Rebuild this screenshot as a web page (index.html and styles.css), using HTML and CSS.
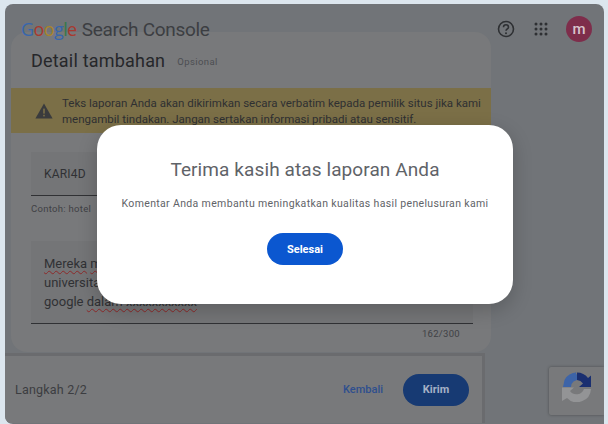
FILE: index.html
```html
<!DOCTYPE html>
<html lang="id">
<head>
<meta charset="utf-8">
<title>Google Search Console</title>
<link rel="stylesheet" href="styles.css">
</head>
<body>
<div class="window">
  <header class="topbar">
    <div class="logo"><span class="g-blue">G</span><span class="g-red">o</span><span class="g-yellow">o</span><span class="g-blue">g</span><span class="g-green">l</span><span class="g-red">e</span> <span class="product">Search Console</span></div>
    <div class="top-actions">
      <svg class="help" viewBox="0 0 24 24" width="20" height="20"><circle cx="12" cy="12" r="9" fill="none" stroke="#2e3033" stroke-width="1.9"/><path d="M9 9.8a3 3 0 0 1 6 0c0 2-3 2.2-3 4.4" fill="none" stroke="#2e3033" stroke-width="1.9"/><circle cx="12" cy="17" r="1.2" fill="#2e3033"/></svg>
      <svg class="apps" viewBox="0 0 14 14" width="14" height="14"><g fill="#2e3033"><circle cx="2" cy="2" r="1.5"/><circle cx="7" cy="2" r="1.5"/><circle cx="12" cy="2" r="1.5"/><circle cx="2" cy="7" r="1.5"/><circle cx="7" cy="7" r="1.5"/><circle cx="12" cy="7" r="1.5"/><circle cx="2" cy="12" r="1.5"/><circle cx="7" cy="12" r="1.5"/><circle cx="12" cy="12" r="1.5"/></g></svg>
      <div class="avatar">m</div>
    </div>
  </header>
  <main class="card">
    <div class="card-head"><h1>Detail tambahan</h1><span class="optional">Opsional</span></div>
    <div class="warning">
      <svg viewBox="0 0 18 16" width="18" height="16"><path d="M9 0.5 17.6 15.5H.4Z" fill="#3a3b3d"/><rect x="8.2" y="5.6" width="1.6" height="5" fill="#7b6f47"/><rect x="8.2" y="11.8" width="1.6" height="1.6" fill="#7b6f47"/></svg>
      <p>Teks laporan Anda akan dikirimkan secara verbatim kepada pemilik situs jika kami<br>mengambil tindakan. Jangan sertakan informasi pribadi atau sensitif.</p>
    </div>
    <div class="field"><div class="field-box">KARI4D</div><div class="hint">Contoh: hotel</div></div>
    <div class="area">
      <div class="area-box"><span class="sq">Mereka</span> <span class="sq">m</span><br>universitas<br>google <span class="sq">dalam xxxxxxxxxxx</span></div>
      <div class="count">162/300</div>
    </div>
  </main>
  <footer class="footer">
    <span class="step">Langkah 2/2</span>
    <div class="footer-actions"><span class="back">Kembali</span><span class="send">Kirim</span></div>
  </footer>
  <div class="recaptcha">
    <svg viewBox="0 0 30 30" width="30" height="30"><path d="M15 0.5A14 14 0 0 1 26 6l3-2.5V15H17l4-3.5A8 8 0 0 0 15 8Z" fill="#1a2f70"/><path d="M15 .5A14 14 0 0 0 2.5 8L1 15h8a7 7 0 0 1 2.500-5.500L15 8V3l-2-3Z" fill="#3d64a8"/><path d="M0 15.500h12l-4 3.500a8 8 0 0 0 14-2h7a14 14 0 0 1-24 9l-5 3Z" fill="#939496"/></svg>
  </div>
</div>
<div class="modal">
  <h2>Terima kasih atas laporan Anda</h2>
  <p>Komentar Anda membantu meningkatkan kualitas hasil penelusuran kami</p>
  <button class="done">Selesai</button>
</div>
</body>
</html>
```
FILE: styles.css
```css
html, body { margin: 0; padding: 0; height: 424px; overflow: hidden; }
body { background: #dce6ee; font-family: Roboto, "Liberation Sans", sans-serif; position: relative; padding: 4px 4px 0 5px; box-sizing: border-box; }
.window { height: 420px; background: #717478; border-radius: 8px 8px 0 8px; position: relative; overflow: hidden; }
.topbar { height: 28px; display: flex; justify-content: space-between; align-items: center; padding: 11px 12px 0 16px; }
.logo { font-family: "Open Sans", Roboto, sans-serif; font-size: 18px; letter-spacing: -0.6px; white-space: nowrap; }
.product { color: #3c3e42; font-family: Roboto, sans-serif; font-size: 19px; letter-spacing: -0.3px; margin-left: 1px; }
.g-blue { color: #3766ac; } .g-red { color: #a8392f; } .g-yellow { color: #a8852a; } .g-green { color: #34794a; }
.top-actions { display: flex; align-items: center; }
.help { margin-right: 18px; }
.apps { margin-right: 18px; }
.avatar { width: 26px; height: 26px; border-radius: 50%; background: #7e2d4b; color: #d8c3cc; font-size: 15px; font-weight: 500; display: flex; align-items: center; justify-content: center; }
.card { width: 480px; height: 320px; margin: -11px 0 0 6px; box-sizing: border-box; background: #78797b; border-radius: 16px 16px 16px 16px; }
.card-head { height: 56px; display: flex; align-items: center; padding: 0 0 0 20px; box-sizing: border-box; }
.card-head h1 { margin: 0; font-family: Roboto, sans-serif; font-weight: 400; font-size: 18px; color: #26272a; letter-spacing: .2px; }
.optional { font-size: 9.500px; color: #4c4e52; margin: 3px 0 0 12px; letter-spacing: .4px; }
.warning { height: 45px; background: #7b6f47; display: flex; align-items: center; padding: 0 0 0 24px; gap: 9px; box-sizing: border-box; }
.warning p { margin: 0; font-size: 11.500px; line-height: 16px; color: #2f3032; white-space: nowrap; }
.field { margin: 19px 0 0 20px; width: 442px; }
.field-box { height: 44px; border-bottom: 1px solid #303134; background: #747577; padding: 0 13px; display: flex; align-items: center; font-size: 12px; color: #303134; box-sizing: border-box; letter-spacing: .2px; }
.hint { font-size: 9.500px; color: #404145; margin-top: 7px; letter-spacing: .3px; }
.area { margin: 27px 0 0 20px; width: 442px; }
.area-box { height: 83px; border-bottom: 1px solid #303134; background: #747577; padding: 13px 13px 0; font-size: 13px; line-height: 19px; color: #303134; box-sizing: border-box; }
.sq { text-decoration: underline wavy #8c2a2a 1px; text-underline-offset: 2px; }
.count { font-size: 9.500px; color: #404145; text-align: right; padding: 4px 13px 0 0; letter-spacing: .3px; }
.footer { width: 480px; height: 70px; margin-top: 1px; border-top: 3px solid #6a6b6e; border-right: 3px solid #6a6b6e; background: #78797b; display: flex; justify-content: space-between; align-items: center; box-sizing: border-box; padding: 0 13px 0 10px; }
.step { font-size: 12.500px; color: #3c3d41; letter-spacing: .2px; }
.footer-actions { display: flex; align-items: center; gap: 20px; }
.back { font-size: 11px; font-weight: 500; color: #2f4f8e; }
.send { width: 66px; height: 32px; border-radius: 16px; background: #173a73; color: #a5b1c6; font-size: 11px; font-weight: 700; display: flex; align-items: center; justify-content: center; }
.recaptcha { position: absolute; right: 0; top: 363px; width: 55px; height: 48px; background: #78797b; border-radius: 2px 0 0 2px; box-shadow: 0 0 3px rgba(0,0,0,.35); box-sizing: border-box; padding: 5px 0 0 13px; }
.modal { position: absolute; left: 97px; top: 125px; width: 416px; height: 179px; background: #fff; border-radius: 24px; box-shadow: 0 6px 20px rgba(0,0,0,.2); text-align: center; }
.modal h2 { margin: 33px 0 0; font-family: Roboto, sans-serif; font-weight: 400; font-size: 19px; line-height: 24px; color: #5f6368; letter-spacing: .1px; }
.modal p { margin: 14px 0 0; font-size: 10.500px; line-height: 16px; color: #5f6368; letter-spacing: .35px; white-space: nowrap; }
.done { display: block; margin: 21px auto 0; width: 76px; height: 32px; border: 0; border-radius: 16px; background: #0b57d0; color: #fff; font-family: Roboto, sans-serif; font-size: 11px; font-weight: 700; padding: 0; }
```
